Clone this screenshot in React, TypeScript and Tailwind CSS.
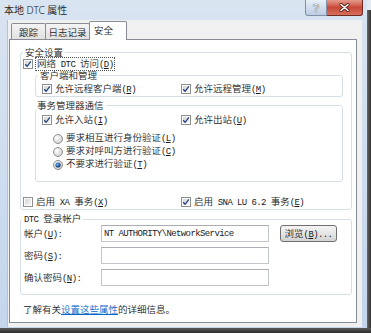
import React from "react";

// Win7 style dialog: 本地 DTC 属性 / 安全 tab

const latin = "font-['Liberation_Mono',monospace] text-[9px] tracking-[-0.6px]";

// "&X" marks an access key (underlined); ASCII runs use the narrow mono font
const T: React.FC<{ s: string }> = ({ s }) => {
  const parts: React.ReactNode[] = [];
  const re = /&(.)|([ -%'-~]+)|([^ -~]+)/g;
  let m: RegExpExecArray | null;
  let i = 0;
  while ((m = re.exec(s))) {
    if (m[1]) {
      parts.push(
        <span key={i++} className={`${latin} underline underline-offset-1`}>
          {m[1]}
        </span>
      );
    } else if (m[2]) {
      parts.push(
        <span key={i++} className={`${latin} whitespace-pre`}>
          {m[2]}
        </span>
      );
    } else {
      parts.push(<span key={i++}>{m[3]}</span>);
    }
  }
  return <>{parts}</>;
};

const Check: React.FC<{ on?: boolean }> = ({ on }) => (
  <svg width="10" height="10" viewBox="0 0 10 10" className="shrink-0">
    <defs>
      <linearGradient id="cbfill" x1="0" y1="0" x2="1" y2="1">
        <stop offset="0" stopColor="#d4d4d4" />
        <stop offset="1" stopColor="#f7f7f7" />
      </linearGradient>
    </defs>
    <rect x="0.5" y="0.5" width="9" height="9" fill="#fdfdfd" stroke="#8e8f8f" />
    <rect x="2" y="2" width="6" height="6" fill="url(#cbfill)" />
    {on && (
      <path
        d="M2.2 5.2 L4.1 7.3 L7.9 2.4"
        fill="none"
        stroke="#22427f"
        strokeWidth="1.3"
      />
    )}
  </svg>
);

const Radio: React.FC<{ on?: boolean }> = ({ on }) => (
  <svg width="10" height="10" viewBox="0 0 10 10" className="shrink-0">
    <defs>
      <radialGradient id="rbfill" cx="0.35" cy="0.35" r="0.7">
        <stop offset="0" stopColor="#ffffff" />
        <stop offset="1" stopColor="#cfcfcf" />
      </radialGradient>
      <radialGradient id="rbdot" cx="0.4" cy="0.4" r="0.6">
        <stop offset="0" stopColor="#8cc4ef" />
        <stop offset="0.5" stopColor="#2e6fb0" />
        <stop offset="1" stopColor="#133b6e" />
      </radialGradient>
    </defs>
    <circle cx="5" cy="5" r="4.5" fill="url(#rbfill)" stroke="#8e8f8f" />
    {on && <circle cx="5" cy="5" r="2.6" fill="url(#rbdot)" />}
  </svg>
);

const CheckRow: React.FC<{ label: string; on?: boolean; className?: string }> = ({
  label,
  on,
  className = "",
}) => (
  <div className={`flex items-center gap-[3px] ${className}`}>
    <Check on={on} />
    <span>
      <T s={label} />
    </span>
  </div>
);

const RadioRow: React.FC<{ label: string; on?: boolean }> = ({ label, on }) => (
  <div className="flex items-center gap-[3px] h-[13px] leading-[11px]">
    <Radio on={on} />
    <span>
      <T s={label} />
    </span>
  </div>
);

const Group: React.FC<{
  label: string;
  className?: string;
  legendClass?: string;
  children: React.ReactNode;
}> = ({ label, className = "", legendClass = "", children }) => (
  <fieldset className={`border border-[#d5dfe5] rounded-[3px] ${className}`}>
    <legend className={`px-[2px] leading-[10px] ${legendClass}`}>
      <T s={label} />
    </legend>
    {children}
  </fieldset>
);

const Field: React.FC<{ label: string; value?: string; children?: React.ReactNode }> = ({
  label,
  value,
  children,
}) => (
  <div className="flex items-center h-[17px] pl-[3px]">
    <span className="w-[77px]">
      <T s={label} />
    </span>
    <div className="w-[168px] h-[17px] border border-[#c2c6cc] border-t-[#abadb3] bg-white pl-[2px] flex items-center">
      {value && <span className={`${latin} whitespace-pre`}>{value}</span>}
    </div>
    {children}
  </div>
);

const TitleBar: React.FC = () => (
  <div className="h-[20px] flex items-start">
    <span className="ml-[4px] mt-[4px] text-[10px] leading-[12px] font-['Noto_Sans','Noto_Sans_CJK_SC',sans-serif]">
      本地 DTC 属性
    </span>
    <div className="ml-auto mr-[4px] flex">
      <div className="w-[22px] h-[16px] border border-t-0 border-[#7f8fa6] rounded-bl-[3px] bg-linear-to-b from-[#e8eff7] to-[#bccde2] flex items-center justify-center">
        <span className="text-[11px] leading-[12px] text-[#eef3f9] font-['Liberation_Sans',sans-serif] [text-shadow:0_0_1px_#3d4c63,0_0_1px_#3d4c63]">
          ?
        </span>
      </div>
      <div className="w-[36px] h-[16px] border border-t-0 border-l-0 border-[#6f2a22] rounded-br-[3px] bg-linear-to-b from-[#e49a8c] via-[#c9483a] to-[#d8705c] flex items-center justify-center">
        <svg width="11" height="9" viewBox="0 0 11 9">
          <path d="M2 1.5 L9 7.5 M9 1.5 L2 7.5" stroke="#4a1c16" strokeWidth="3" strokeLinecap="round" />
          <path d="M2 1.5 L9 7.5 M9 1.5 L2 7.5" stroke="#ffffff" strokeWidth="1.6" strokeLinecap="round" />
        </svg>
      </div>
    </div>
  </div>
);

const Tabs: React.FC = () => (
  <div className="flex items-end h-[19px] pl-[2px]">
    <div className="mb-px w-[35px] h-[16px] border border-b-0 border-[#898c95] rounded-t-[2px] bg-linear-to-b from-[#f4f4f4] to-[#e1e1e1] flex items-center justify-center">
      跟踪
    </div>
    <div className="mb-px -ml-px w-[45px] h-[16px] border border-b-0 border-[#898c95] rounded-t-[2px] bg-linear-to-b from-[#f4f4f4] to-[#e1e1e1] flex items-center justify-center">
      日志记录
    </div>
    <div className="relative z-10 -ml-px w-[38px] h-[19px] border border-b-0 border-[#898c95] rounded-t-[2px] bg-white flex items-start pt-[2px] pl-[4px]">
      安全
    </div>
  </div>
);

export default function App() {
  return (
    <div className="w-[371px] h-[333px] flex flex-col overflow-hidden bg-[#e4ebf3] font-['Noto_Sans_CJK_SC',sans-serif] font-[350] text-[9.5px] leading-[12px] text-[#1a1a1a]">
      <div className="flex h-[328px]">
        <div className="w-[367px] h-[328px] flex flex-col bg-linear-to-b from-[#d9e4f1] to-[#c4d6ec]">
          <TitleBar />
          <div className="ml-[7px] mr-[5px] mb-[1px] flex-1 bg-[#f0f0f0] border-l border-[#b4c2d4] pl-[1px] pt-[1px]">
            <Tabs />
            <div className="-mt-px w-[348px] h-[284px] border border-[#898c95] bg-white flex flex-col">
              <Group
                label="安全设置"
                className="ml-[10px] mt-[7px] w-[332px] h-[163px]"
                legendClass="ml-[2px]"
              >
                <div className="mt-[1px] h-[12px] flex items-center pl-[2px]">
                  <Check on />
                  <span className="ml-[2px] border border-dotted border-[#555] px-[1px] leading-[10px]">
                    <T s="网络 DTC 访问(&D)" />
                  </span>
                </div>
                <Group
                  label="客户端和管理"
                  className="ml-[14px] w-[308px] pt-[3px] pb-[1px]"
                  legendClass="ml-[2px]"
                >
                  <div className="flex h-[12px] pl-[6px]">
                    <CheckRow label="允许远程客户端(&R)" on className="w-[139px]" />
                    <CheckRow label="允许远程管理(&M)" on />
                  </div>
                </Group>
                <Group
                  label="事务管理器通信"
                  className="mt-[3px] ml-[14px] w-[308px] pt-[4px] pb-[10px]"
                  legendClass="-ml-[1px]"
                >
                  <div className="flex h-[12px] pl-[6px]">
                    <CheckRow label="允许入站(&I)" on className="w-[139px]" />
                    <CheckRow label="允许出站(&U)" on />
                  </div>
                  <div className="mt-[6px] pl-[17px] flex flex-col">
                    <RadioRow label="要求相互进行身份验证(&L)" />
                    <RadioRow label="要求对呼叫方进行验证(&C)" />
                    <RadioRow label="不要求进行验证(&T)" on />
                  </div>
                </Group>
                <div className="mt-[14px] flex h-[12px] pl-[2px]">
                  <CheckRow label="启用 XA 事务(&X)" className="w-[158px]" />
                  <CheckRow label="启用 SNA LU 6.2 事务(&E)" on />
                </div>
              </Group>

              <Group
                label="DTC 登录帐户"
                className="ml-[10px] mt-[3px] w-[332px] pb-[8px] flex flex-col"
                legendClass="ml-[1px]"
              >
                <div className="flex flex-col gap-[5px]">
                  <Field label="帐户(&U):" value={"NT AUTHORITY\\NetworkService"}>
                    <button className="ml-[11px] w-[57px] h-[17px] border border-[#707070] rounded-[3px] bg-linear-to-b from-[#f4f4f4] via-[#e6e6e6] to-[#d2d2d2] flex items-center justify-center leading-[12px]">
                      <span>
                        <T s="浏览(&B)..." />
                      </span>
                    </button>
                  </Field>
                  <Field label="密码(&S):" />
                  <Field label="确认密码(&N):" />
                </div>
              </Group>

              <div className="ml-[13px] mt-[8px]">
                了解有关
                <span className="text-[#0066cc] underline underline-offset-1">设置这些属性</span>
                的详细信息。
              </div>
            </div>
          </div>
        </div>
        <div className="w-[4px] mt-[10px] bg-linear-to-r from-[#6a6a6a] to-[#303030]" />
      </div>
      <div className="h-[5px] bg-linear-to-b from-[#5a5a5a] to-[#2c2c2c]" />
    </div>
  );
}
